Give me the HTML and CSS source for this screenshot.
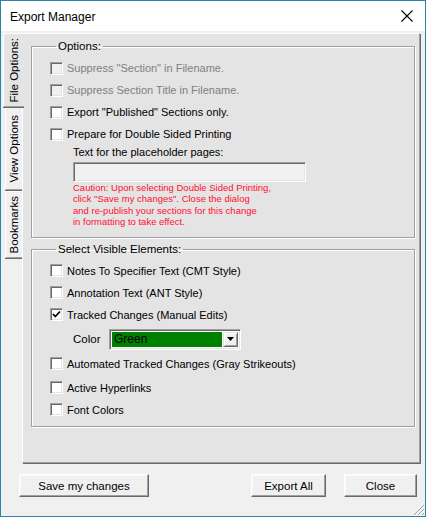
FILE: index.html
```html
<!DOCTYPE html>
<html>
<head>
<meta charset="utf-8">
<title>Export Manager</title>
<link rel="stylesheet" href="styles.css">
</head>
<body>
<div class="window">
  <div class="titlebar">
    <span class="title">Export Manager</span>
    <svg class="close" width="12" height="12" viewBox="0 0 12 12"><path d="M0.5 0.5 L11.5 11.5 M11.5 0.5 L0.5 11.5" stroke="#000" stroke-width="1.1" fill="none"/></svg>
  </div>
  <div class="client">
    <div class="tabarea">
      <div class="tabs">
        <div class="tab selected"><span>File Options:</span></div>
        <div class="tab tab-view"><span>View Options</span></div>
        <div class="tab tab-book"><span>Bookmarks</span></div>
      </div>
      <div class="panel">
        <fieldset class="group group-options">
          <legend>Options:</legend>
          <div class="row disabled"><span class="cb"></span><span>Suppress "Section" in Filename.</span></div>
          <div class="row disabled"><span class="cb"></span><span>Suppress Section Title in Filename.</span></div>
          <div class="row"><span class="cb"></span><span>Export "Published" Sections only.</span></div>
          <div class="row"><span class="cb"></span><span>Prepare for Double Sided Printing</span></div>
          <div class="indent">
            <div class="label">Text for the placeholder pages:</div>
            <div class="textbox"></div>
            <div class="caution">Caution: Upon selecting Double Sided Printing,<br>click "Save my changes". Close the dialog<br>and re-publish your sections for this change<br>in formatting to take effect.</div>
          </div>
        </fieldset>
        <fieldset class="group group-visible">
          <legend>Select Visible Elements:</legend>
          <div class="row"><span class="cb"></span><span>Notes To Specifier Text (CMT Style)</span></div>
          <div class="row"><span class="cb"></span><span>Annotation Text (ANT Style)</span></div>
          <div class="row"><span class="cb checked"><svg width="9" height="9" viewBox="0 0 9 9"><path d="M1 4 L3.3 6.5 L8 1.5" stroke="#000" stroke-width="1.7" fill="none"/></svg></span><span>Tracked Changes (Manual Edits)</span></div>
          <div class="colorrow">
            <span class="colorlabel">Color</span>
            <div class="combo">
              <div class="combo-field">Green</div>
              <div class="combo-btn"><svg width="7" height="4" viewBox="0 0 7 4"><path d="M0 0 H7 L3.5 4 Z" fill="#000"/></svg></div>
            </div>
          </div>
          <div class="row gap-after"><span class="cb"></span><span>Automated Tracked Changes (Gray Strikeouts)</span></div>
          <div class="row"><span class="cb"></span><span>Active Hyperlinks</span></div>
          <div class="row"><span class="cb"></span><span>Font Colors</span></div>
        </fieldset>
      </div>
    </div>
    <div class="buttons">
      <button class="btn btn-save">Save my changes</button>
      <span class="spacer"></span>
      <button class="btn btn-export">Export All</button>
      <button class="btn btn-close">Close</button>
    </div>
    <svg class="grip" width="13" height="13" viewBox="0 0 13 13">
      <path d="M12 2 L2 12 M12 6 L6 12 M12 10 L10 12" stroke="#a0a0a0" stroke-width="1" fill="none"/>
      <path d="M12.8 2.8 L2.8 12.8 M12.8 6.8 L6.8 12.8" stroke="#fff" stroke-width="1" fill="none"/>
    </svg>
  </div>
</div>
</body>
</html>
```
FILE: styles.css
```css
html, body {
  margin: 0;
  padding: 0;
  background: #f0f0f0;
}
body {
  font-family: "Liberation Sans", Arial, sans-serif;
  font-size: 11px;
  color: #000;
}
.window {
  width: 426px;
  height: 517px;
  box-sizing: border-box;
  border: 1px solid #2a83ab;
  display: flex;
  flex-direction: column;
  position: relative;
  background: #f0f0f0;
}
.titlebar {
  height: 30px;
  background: #fff;
  display: flex;
  align-items: center;
  padding: 0 12px 0 9px;
  flex: none;
}
.title {
  font-size: 12px;
  flex: 1;
  padding-top: 1px;
}
.close {
  display: block;
}
.client {
  flex: 1;
  display: flex;
  flex-direction: column;
  padding: 2px 5px 0 2px;
}
.tabarea {
  display: flex;
  height: 430px;
}
.tabs {
  width: 19px;
  flex: none;
  display: flex;
  flex-direction: column;
}
.tab {
  display: flex;
  align-items: center;
  justify-content: center;
  box-sizing: border-box;
  font-size: 11.5px;
}
.tab span {
  writing-mode: vertical-rl;
  transform: rotate(180deg);
  white-space: nowrap;
}
.tab.selected {
  height: 74px;
  width: 21px;
  margin-right: -2px;
  position: relative;
  z-index: 1;
  background: #e4e4e4;
  border-top: 1px solid #fff;
  border-left: 1px solid #fff;
  border-bottom: 1px solid #a0a0a0;
  box-shadow: 0 1px 0 #696969;
}
.tab.tab-view {
  height: 83px;
  margin-left: 2px;
  width: 17px;
  border-left: 1px solid #fff;
  border-bottom: 1px solid #a0a0a0;
  box-shadow: 0 1px 0 #696969;
  padding-top: 2px;
}
.tab.tab-book {
  height: 67px;
  margin-left: 2px;
  width: 17px;
  margin-top: 1px;
  border-left: 1px solid #fff;
  border-top: 1px solid #fff;
  border-bottom: 1px solid #a0a0a0;
  box-shadow: 0 1px 0 #696969;
}
.panel {
  flex: 1;
  box-sizing: border-box;
  background: #e4e4e4;
  border-top: 1px solid #fff;
  border-left: 1px solid #fff;
  border-right: 1px solid #a0a0a0;
  border-bottom: 1px solid #a0a0a0;
  box-shadow: 1px 1px 0 #696969;
  padding: 0 4px 0 8px;
  display: flex;
  flex-direction: column;
}
.group {
  margin: 0;
  min-inline-size: 0;
  border: 1px solid #a0a0a0;
  box-shadow: inset 1px 1px 0 #fff, 1px 1px 0 #fff;
  padding: 4px 4px 9px 18px;
}
.group legend {
  padding: 0 2px;
  margin-left: 6px;
  line-height: 13px;
  font-size: 11.5px;
}
.group-options {
  margin-top: 6px;
}
.group-visible {
  margin-top: 5px;
  padding-bottom: 5px;
}
.row {
  display: flex;
  align-items: center;
  gap: 4px;
  height: 22px;
  white-space: nowrap;
}
.row.disabled {
  color: #7f7f7f;
}
.row.gap-after {
  margin-bottom: 2px;
}
.cb {
  width: 13px;
  height: 13px;
  box-sizing: border-box;
  flex: none;
  background: #fff;
  border: 1px solid;
  border-color: #a0a0a0 #fff #fff #a0a0a0;
  box-shadow: inset 1px 1px 0 #696969, inset -1px -1px 0 #e3e3e3;
  display: flex;
  align-items: center;
  justify-content: center;
}
.row.disabled .cb {
  background: #f0f0f0;
}
.cb svg {
  display: block;
}
.indent {
  margin-left: 23px;
}
.label {
  line-height: 13px;
  padding-top: 0.5px;
}
.textbox {
  width: 233px;
  height: 20px;
  box-sizing: border-box;
  margin-top: 3px;
  background: #f0f0f0;
  border: 1px solid;
  border-color: #a0a0a0 #fff #fff #a0a0a0;
  box-shadow: inset 1px 1px 0 #696969, inset -1px -1px 0 #e3e3e3;
}
.caution {
  color: #ff1030;
  font-size: 9.5px;
  line-height: 11.5px;
  white-space: nowrap;
}
.colorrow {
  display: flex;
  align-items: center;
  height: 27px;
  margin-left: 23px;
}
.colorlabel {
  font-size: 11.5px;
  width: 36px;
}
.combo {
  width: 132px;
  height: 21px;
  box-sizing: border-box;
  display: flex;
  border: 1px solid;
  border-color: #a0a0a0 #fff #fff #a0a0a0;
  box-shadow: inset 1px 1px 0 #696969, inset -1px -1px 0 #e3e3e3;
  padding: 2px;
  background: #fff;
}
.combo-field {
  flex: 1;
  background: #008000;
  color: #000;
  font-size: 12px;
  line-height: 15px;
  padding-left: 2px;
  margin-right: 1px;
}
.combo-btn {
  width: 15px;
  box-sizing: border-box;
  background: #f0f0f0;
  border: 1px solid;
  border-color: #e3e3e3 #696969 #696969 #e3e3e3;
  box-shadow: inset 1px 1px 0 #fff, inset -1px -1px 0 #a0a0a0;
  display: flex;
  align-items: center;
  justify-content: center;
}
.combo-btn svg {
  display: block;
}
.buttons {
  display: flex;
  margin-top: 11px;
  padding: 0 3px 0 16px;
  gap: 18px;
}
.spacer {
  flex: 1;
}
.btn {
  height: 23px;
  box-sizing: border-box;
  font-family: "Liberation Sans", Arial, sans-serif;
  font-size: 11.5px;
  color: #000;
  background: #f0f0f0;
  border: 1px solid;
  border-color: #fff #696969 #696969 #fff;
  box-shadow: inset -1px -1px 0 #a0a0a0, inset 1px 1px 0 #f8f8f8;
  padding: 0;
  margin: 0;
}
.btn-save {
  width: 130px;
}
.btn-export {
  width: 75px;
}
.btn-close {
  width: 73px;
}
.grip {
  position: absolute;
  right: 0;
  bottom: 0;
}
```
